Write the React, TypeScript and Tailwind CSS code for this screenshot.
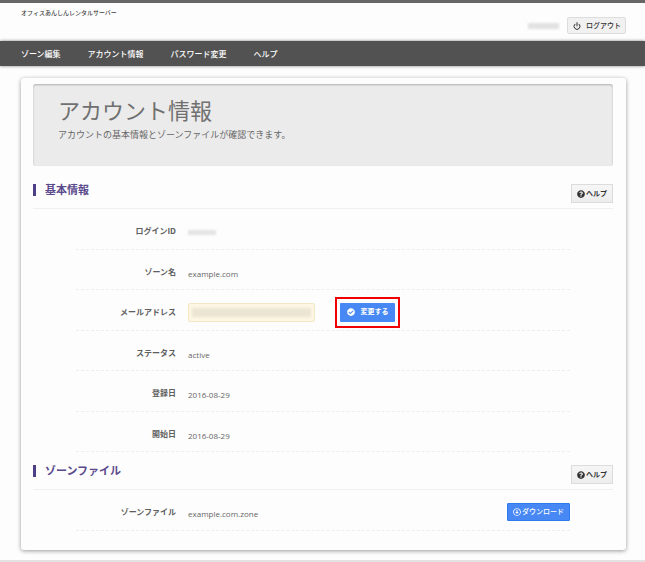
import type { ReactNode } from 'react';
import { FaCheckCircle, FaQuestionCircle, FaRegArrowAltCircleDown } from 'react-icons/fa';
import { Power } from 'lucide-react';

const navItems = ['ゾーン編集', 'アカウント情報', 'パスワード変更', 'ヘルプ'];

function SectionHeader({ title }: { title: string }) {
  return (
    <div className="flex items-start justify-between border-b border-[#f0f0f0] pb-[5px]">
      <h2 className="border-l-3 border-[#4f3f86] pl-[9px] text-[11px] leading-3 font-bold text-[#5a4a8c]">{title}</h2>
      <button
        type="button"
        className="flex h-[19px] cursor-pointer items-center gap-px border border-[#dcdcdc] bg-linear-to-b from-[#f6f6f6] to-[#ededed] px-[5px] text-[7px] font-bold text-[#333333]"
      >
        <FaQuestionCircle className="size-2" />
        ヘルプ
      </button>
    </div>
  );
}

interface RowProps {
  label: string;
  htmlFor?: string;
  children: ReactNode;
}

function Row({ label, htmlFor, children }: RowProps) {
  const labelStyle = 'w-[100px] shrink-0 text-right text-[8px] font-bold text-[#606060]';

  return (
    <div className="flex h-[41px] items-center gap-3 border-b border-dashed border-[#eeeeee] pt-1 even:h-10">
      {htmlFor ? (
        <label htmlFor={htmlFor} className={labelStyle}>{label}</label>
      ) : (
        <span className={labelStyle}>{label}</span>
      )}
      {children}
    </div>
  );
}

function Value({ children }: { children: ReactNode }) {
  return <span className="pt-1 text-[8px] text-[#666666]">{children}</span>;
}

export default function App() {
  return (
    <div className="bg-[#fdfdfd] font-['Open_Sans','Noto_Sans_CJK_JP',sans-serif] leading-3 text-[#555555]">
      <header className="flex h-[41px] items-start justify-between border-t-3 border-[#666666] pr-[19px] pl-[21px]">
        <p className="pt-1 text-[6px] font-medium text-[#444444]">オフィスあんしんレンタルサーバー</p>
        <div className="flex items-center gap-2 pt-[14px]">
          <span className="h-[6px] w-[31px] bg-[#e2e2e2] blur-[1px]" />
          <button
            type="button"
            className="flex h-[17px] cursor-pointer items-center gap-[5px] rounded-[2px] border border-[#dddddd] bg-[#f1f1f1] pr-1 pl-[5px] text-[7px] font-medium text-[#333333]"
          >
            <Power className="size-2" strokeWidth={3} />
            ログアウト
          </button>
        </div>
      </header>

      <nav className="flex h-[25px] items-center gap-[27px] bg-[#525252] pl-[21px] text-[8px] font-medium text-white shadow-[0_0_3px_rgba(0,0,0,0.5)]">
        {navItems.map((item) => (
          <a key={item} href="#">{item}</a>
        ))}
      </nav>

      <main className="pt-3 pr-[19px] pb-[10px] pl-[21px]">
        <div className="rounded-[3px] bg-[#fdfdfd] pt-[6px] pr-[13px] pb-[19px] pl-3 shadow-[0_1px_4px_rgba(0,0,0,0.4)]">
          <div className="mb-[18px] rounded-[3px] bg-[#ebebeb] px-[25px] pt-3 pb-[25px] shadow-[inset_0_1px_2px_rgba(0,0,0,0.25)]">
            <h1 className="text-[22px] leading-7 font-normal text-[#707070]">アカウント情報</h1>
            <p className="mt-[5px] text-[9px] text-[#666666]">アカウントの基本情報とゾーンファイルが確認できます。</p>
          </div>

          <section className="mb-[13px]">
            <SectionHeader title="基本情報" />
            <div className="mx-[43px]">
              <Row label="ログインID">
                <span className="mt-0.5 h-[5px] w-[28px] bg-[#e4e4e4] blur-[1px]" />
              </Row>
              <Row label="ゾーン名">
                <Value>example.com</Value>
              </Row>
              <Row label="メールアドレス" htmlFor="email">
                <div className="relative w-[127px]">
                  <input
                    id="email"
                    type="email"
                    readOnly
                    className="block h-[19px] w-full rounded-[2px] border border-[#f3e8c6] bg-[#fcf6e2] px-1 text-[8px]"
                  />
                  <span className="absolute inset-x-1 top-[5px] h-[9px] bg-[#ebe6d3] blur-[1px]" />
                </div>
                <div className="ml-2 border-2 border-[#f00000] px-[3px] py-1">
                  <button
                    type="button"
                    className="flex h-[19px] w-[55px] cursor-pointer items-center justify-center gap-[6px] rounded-[1px] bg-[#4788f4] text-[7px] font-bold text-white"
                  >
                    <FaCheckCircle className="size-2" />
                    変更する
                  </button>
                </div>
              </Row>
              <Row label="ステータス">
                <Value>active</Value>
              </Row>
              <Row label="登録日">
                <Value>2016-08-29</Value>
              </Row>
              <Row label="開始日">
                <Value>2016-08-29</Value>
              </Row>
            </div>
          </section>

          <section>
            <SectionHeader title="ゾーンファイル" />
            <div className="mx-[43px]">
              <Row label="ゾーンファイル">
                <Value>example.com.zone</Value>
                <button
                  type="button"
                  className="ml-auto flex h-[18px] w-[63px] cursor-pointer items-center justify-center gap-px rounded-[1px] border border-[#3079ed] bg-[#4788f4] text-[7px] font-medium text-white"
                >
                  <FaRegArrowAltCircleDown className="size-2" />
                  ダウンロード
                </button>
              </Row>
            </div>
          </section>
        </div>
      </main>

      <footer className="h-0.5 bg-[#e2e2e2]" />
    </div>
  );
}
